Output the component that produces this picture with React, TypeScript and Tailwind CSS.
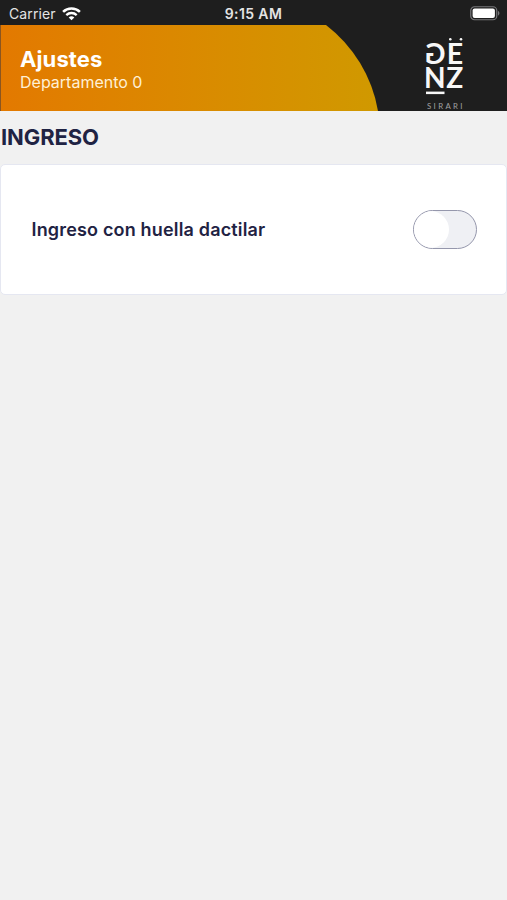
import React from "react";

function WifiIcon() {
  return (
    <svg width="19" height="14" viewBox="0 0 19 14" fill="none">
      <path d="M1.1 4.9C5.8 .4 13.2 .4 17.9 4.9" stroke="#fff" strokeWidth="2.6" />
      <path d="M4.3 8.1C7.3 5.3 11.7 5.3 14.7 8.1" stroke="#fff" strokeWidth="2.3" />
      <path d="M6.7 10.4C8.3 9 10.7 9 12.3 10.4L9.5 13.2Z" fill="#fff" />
    </svg>
  );
}

function BatteryIcon() {
  return (
    <svg width="30" height="15" viewBox="0 0 30 15" fill="none">
      <rect x="0.75" y="0.75" width="26" height="13" rx="3.8" stroke="#77777a" strokeWidth="1.2" />
      <rect x="2.6" y="2.6" width="22.3" height="9.3" rx="2" fill="#fff" />
      <path d="M28 5C29.9 5.7 29.9 8.8 28 9.5Z" fill="#77777a" />
    </svg>
  );
}

function GenzLogo() {
  return (
    <svg width="40" height="74" viewBox="0 0 40 74" fill="#f7f7f7" className="font-['Lato',sans-serif] font-bold">
      <circle cx="25.3" cy="3.3" r="1.3" />
      <circle cx="36" cy="3.3" r="1.3" />
      <text transform="translate(20.4 28.3) scale(-1 1)" fontSize="28" textLength="20.4" lengthAdjust="spacingAndGlyphs">G</text>
      <text x="21.8" y="28.2" fontSize="28" textLength="16.4" lengthAdjust="spacingAndGlyphs">E</text>
      <text x="-1" y="52.4" fontSize="28" textLength="21.6" lengthAdjust="spacingAndGlyphs">N</text>
      <text x="21.2" y="52.4" fontSize="28" textLength="17" lengthAdjust="spacingAndGlyphs">Z</text>
      <rect x="1" y="55.6" width="18.5" height="2.5" />
      <text x="2" y="72.6" fontSize="7.8" fontWeight="400" fill="#a3a3a3" textLength="35.5">SIRARI</text>
    </svg>
  );
}

export default function App() {
  const [fingerprint, setFingerprint] = React.useState(false);

  return (
    <div className="min-h-screen w-full bg-[#f1f1f1] font-['Inter',sans-serif] text-[#1f2343]">
      <div className="bg-[#1e1e1e]">
        <div className="h-[25px] grid grid-cols-3 items-center pl-[9px] pr-[7px] pt-[2px] text-[14px] text-[#e4e4e4]">
          <div className="flex flex-row items-center gap-[6px]">
            <span className="tracking-[0.1px]">Carrier</span>
            <WifiIcon />
          </div>
          <span className="-ml-[2px] text-center font-semibold tracking-[0.4px]">9:15 AM</span>
          <div className="flex justify-end">
            <BatteryIcon />
          </div>
        </div>
        <div className="h-[85.5px] flex flex-row justify-between">
          <div className="w-[378px] h-full pl-[19px] pt-[21px] border-l border-[#8a5520] bg-linear-to-r from-[#e37900] to-[#d09900] [clip-path:path('M0_0H326A138_138_0_0_1_378_86H0Z')]">
            <p className="text-[22px] leading-[26px] font-bold tracking-[0.1px] text-white">Ajustes</p>
            <p className="text-base leading-5 text-[#fff0d5]">Departamento 0</p>
          </div>
          <div className="pt-[11px] pr-[42px]">
            <GenzLogo />
          </div>
        </div>
      </div>
      <h1 className="pl-px pt-[12.5px] h-[53px] text-[22px] leading-7 font-bold tracking-[-0.1px]">INGRESO</h1>
      <div className="h-[131.5px] flex flex-row items-center justify-between pl-[30.5px] pr-[29px] bg-white border border-[#e5e7f1] rounded-[5px]">
        <span className="pt-px text-lg font-semibold tracking-[0.17px]">Ingreso con huella dactilar</span>
        <button
          role="switch"
          aria-checked={fingerprint}
          aria-label="Ingreso con huella dactilar"
          onClick={() => setFingerprint(!fingerprint)}
          className={`w-16 h-[39px] flex items-center overflow-hidden rounded-full border border-[#9597ac] bg-[#eff0f4] ${
            fingerprint ? "justify-end" : ""
          }`}
        >
          <span
            className={`w-[35px] h-full bg-white ${
              fingerprint ? "rounded-l-full" : "rounded-r-full"
            }`}
          ></span>
        </button>
      </div>
    </div>
  );
}
